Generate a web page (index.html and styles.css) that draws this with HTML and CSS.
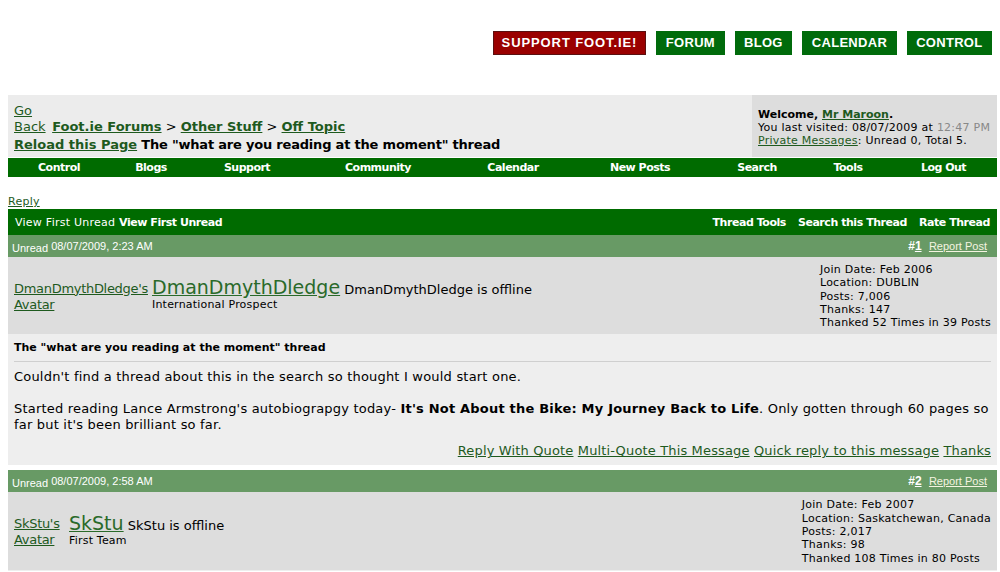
FILE: index.html
```html
<!DOCTYPE html>
<html>
<head>
<meta charset="utf-8">
<link rel="stylesheet" href="styles.css">
</head>
<body>
<div class="page">
  <div class="topbar">
    <a class="tbtn red" href="#">SUPPORT FOOT.IE!</a>
    <a class="tbtn" href="#">FORUM</a>
    <a class="tbtn" href="#">BLOG</a>
    <a class="tbtn" href="#">CALENDAR</a>
    <a class="tbtn" href="#">CONTROL</a>
  </div>

  <div class="crumbrow">
    <div class="crumbs">
      <div class="line"><span class="goback"><a href="#">Go Back</a></span> <a class="b" href="#">Foot.ie Forums</a> &gt; <a class="b" href="#">Other Stuff</a> &gt; <a class="b" href="#">Off Topic</a></div>
      <div class="line l2"><a class="b" href="#">Reload this Page</a> <strong>The "what are you reading at the moment" thread</strong></div>
    </div>
    <div class="welcome">
      <div><strong>Welcome, <a href="#">Mr Maroon</a>.</strong></div>
      <div>You last visited: 08/07/2009 at <span class="time">12:47 PM</span></div>
      <div><a href="#">Private Messages</a>: Unread 0, Total 5.</div>
    </div>
  </div>

  <div class="navbar">
    <a href="#">Control</a>
    <a href="#">Blogs</a>
    <a href="#">Support</a>
    <a href="#">Community</a>
    <a href="#">Calendar</a>
    <a href="#">New Posts</a>
    <a href="#">Search</a>
    <a href="#">Tools</a>
    <a href="#">Log Out</a>
  </div>

  <div class="replyrow"><a href="#">Reply</a></div>

  <div class="threadbar">
    <div class="tleft">View First Unread <strong>View First Unread</strong></div>
    <div class="tright"><span>Thread Tools</span><span>Search this Thread</span><span>Rate Thread</span></div>
  </div>

  <div class="post">
    <div class="phead">
      <div class="pdate"><span class="unread">Unread</span> 08/07/2009, 2:23 AM</div>
      <div class="pnum">#<a href="#">1</a> <a class="report" href="#">Report Post</a></div>
    </div>
    <div class="puser">
      <div class="avatar"><a href="#">DmanDmythDledge's Avatar</a></div>
      <div class="uname">
        <div><a class="big" href="#">DmanDmythDledge</a> DmanDmythDledge is offline</div>
        <div class="utitle">International Prospect</div>
      </div>
      <div class="uinfo">
        <div>Join Date: Feb 2006</div>
        <div>Location: DUBLIN</div>
        <div>Posts: 7,006</div>
        <div>Thanks: 147</div>
        <div>Thanked 52 Times in 39 Posts</div>
      </div>
    </div>
    <div class="pbody">
      <div class="ptitle">The "what are you reading at the moment" thread</div>
      <div class="ptext">Couldn't find a thread about this in the search so thought I would start one.<br><br>Started reading Lance Armstrong's autobiograpgy today- <strong>It's Not About the Bike: My Journey Back to Life</strong>. Only gotten through 60 pages so far but it's been brilliant so far.</div>
      <div class="plinks"><a href="#">Reply With Quote</a> <a href="#">Multi-Quote This Message</a> <a href="#">Quick reply to this message</a> <a href="#">Thanks</a></div>
    </div>
  </div>

  <div class="post">
    <div class="phead">
      <div class="pdate"><span class="unread">Unread</span> 08/07/2009, 2:58 AM</div>
      <div class="pnum">#<a href="#">2</a> <a class="report" href="#">Report Post</a></div>
    </div>
    <div class="puser">
      <div class="avatar av2"><a href="#">SkStu's Avatar</a></div>
      <div class="uname">
        <div><a class="big" href="#">SkStu</a> SkStu is offline</div>
        <div class="utitle">First Team</div>
      </div>
      <div class="uinfo">
        <div>Join Date: Feb 2007</div>
        <div>Location: Saskatchewan, Canada</div>
        <div>Posts: 2,017</div>
        <div>Thanks: 98</div>
        <div>Thanked 108 Times in 80 Posts</div>
      </div>
    </div>
  </div>
</div>
</body>
</html>
```

FILE: styles.css
```css
html, body {
  margin: 0;
  padding: 0;
  background: #ffffff;
}
body {
  font-family: "DejaVu Sans", Verdana, sans-serif;
  font-size: 13px;
  color: #000;
  overflow: hidden;
}
a {
  color: #1e5a1e;
}
.page {
  margin-left: 8px;
  width: 989px;
}
.topbar {
  height: 95px;
  display: flex;
  justify-content: flex-end;
  align-items: flex-start;
  gap: 10px;
  padding-right: 5px;
  box-sizing: border-box;
  padding-top: 31px;
}
.tbtn {
  display: block;
  height: 24px;
  line-height: 24px;
  padding: 0 9.5px;
  background: #006b0b;
  color: #fff;
  text-decoration: none;
  font-family: "Liberation Sans", Arial, sans-serif;
  font-weight: bold;
  font-size: 13px;
  letter-spacing: 0.3px;
  box-sizing: border-box;
}
.tbtn.red {
  background: #9a0000;
  border: 1px solid #5a1010;
  line-height: 22px;
  padding: 0 8px;
  letter-spacing: 0.9px;
}
.crumbrow {
  display: flex;
  height: 62px;
}
.crumbs {
  flex: 1;
  background: #ececec;
  padding: 8px 6px 0 6px;
  font-size: 13px;
  line-height: 17px;
}
.crumbs .line {
  white-space: nowrap;
}
.crumbs .l2 {
  line-height: 19px;
}
.goback {
  display: inline-block;
  width: 34px;
  white-space: normal;
  line-height: 16px;
}
.crumbs a.b {
  font-weight: bold;
  color: #1e5a1e;
}
.crumbs strong {
  letter-spacing: -0.2px;
}
.welcome {
  width: 245px;
  background: #dddddd;
  padding: 13px 0 0 6px;
  box-sizing: border-box;
  font-size: 11px;
  line-height: 13px;
  letter-spacing: 0.25px;
}
.welcome strong {
  letter-spacing: 0;
}
.welcome .time {
  color: #888;
}
.navbar {
  margin-top: 1px;
  height: 19px;
  background: #006b00;
  display: grid;
  grid-template-columns: 102px 82px 110px 152px 118px 136px 98px 84px 107px;
  align-items: center;
}
.navbar a {
  color: #fff;
  text-decoration: none;
  font-weight: bold;
  font-size: 11px;
  letter-spacing: -0.5px;
  text-align: center;
}
.replyrow {
  height: 32px;
  display: flex;
  align-items: flex-end;
  font-size: 11px;
  letter-spacing: 0.25px;
  padding-bottom: 1px;
  box-sizing: border-box;
}
.threadbar {
  height: 26px;
  background: #006b00;
  color: #fff;
  display: flex;
  justify-content: space-between;
  align-items: center;
  font-size: 11px;
  padding: 0 7px;
  letter-spacing: 0.25px;
}
.threadbar strong,
.tright {
  letter-spacing: -0.45px;
}
.tright {
  display: flex;
  gap: 12px;
  font-weight: bold;
}
.post {
  margin-bottom: 5px;
}
.phead {
  height: 22px;
  background: #689a65;
  color: #fff;
  display: flex;
  justify-content: space-between;
  align-items: center;
  padding: 0 10px 0 4px;
  font-family: "Liberation Sans", Arial, sans-serif;
  font-size: 11px;
}
.pdate .unread {
  position: relative;
  top: 2px;
  font-size: 11px;
}
.pnum {
  font-size: 12px;
  font-weight: bold;
}
.pnum a {
  color: #fff;
}
.pnum .report {
  font-weight: normal;
  font-size: 11px;
  margin-left: 4px;
  color: #f4f4e0;
}
.puser {
  background: #dddddd;
  display: flex;
  align-items: center;
  padding: 6px 6px 5px 6px;
  border-bottom: 1px solid #eeeeee;
}
.avatar {
  width: 138px;
  line-height: 16px;
  font-size: 13px;
  padding-top: 1px;
}
.avatar a {
  letter-spacing: -0.3px;
}
.avatar.av2 {
  width: 55px;
}
.uname {
  flex: 1;
  font-size: 13px;
  line-height: 17px;
  padding-bottom: 2px;
}
.uname a.big {
  font-size: 19px;
  color: #2a6a2a;
}
.utitle {
  font-size: 11px;
  line-height: 13px;
  letter-spacing: 0.2px;
}
.uinfo {
  font-size: 11px;
  line-height: 13.3px;
  letter-spacing: 0.25px;
}
.pbody {
  background: #eeeeee;
  padding: 6px 6px 6px 6px;
}
.ptitle {
  font-size: 11px;
  font-weight: bold;
  padding-bottom: 6px;
  border-bottom: 1px solid #cfcfcf;
  line-height: 14px;
}
.ptext {
  font-size: 13px;
  line-height: 16px;
  padding-top: 7px;
  letter-spacing: 0.2px;
}
.plinks {
  text-align: right;
  font-size: 13px;
  line-height: 16px;
  padding-top: 10px;
  letter-spacing: 0.15px;
}
```
